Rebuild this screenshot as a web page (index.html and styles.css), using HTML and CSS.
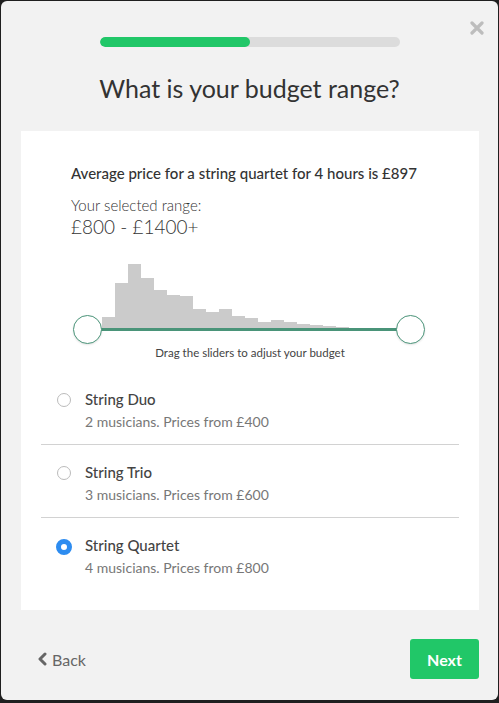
FILE: index.html
```html
<!DOCTYPE html>
<html lang="en">
<head>
  <meta charset="UTF-8">
  <title>Budget range</title>
  <link rel="stylesheet" href="styles.css">
</head>
<body>

<div class="modal">
  <button class="close" aria-label="Close">
    <svg width="14" height="14" viewBox="0 0 14 14"><path d="M2 2 L12 12 M12 2 L2 12" stroke="#bdbdbd" stroke-width="3.2" stroke-linecap="round"/></svg>
  </button>

  <div class="progress"><div class="progress-fill"></div></div>

  <h1>What is your budget range?</h1>

  <div class="card">
    <div class="summary">
      <p class="avg">Average price for a string quartet for 4 hours is £897</p>
      <p class="range-label">Your selected range:</p>
      <p class="range-value">£800 - £1400+</p>
    </div>

    <div class="slider">
      <div class="histogram">
        <span style="height:11px"></span>
        <span style="height:45px"></span>
        <span style="height:64px"></span>
        <span style="height:50px"></span>
        <span style="height:38px"></span>
        <span style="height:33px"></span>
        <span style="height:32px"></span>
        <span style="height:19px"></span>
        <span style="height:16px"></span>
        <span style="height:19px"></span>
        <span style="height:12px"></span>
        <span style="height:10px"></span>
        <span style="height:6px"></span>
        <span style="height:8px"></span>
        <span style="height:6px"></span>
        <span style="height:4px"></span>
        <span style="height:3px"></span>
        <span style="height:2px"></span>
        <span style="height:1px"></span>
      </div>
      <div class="track"></div>
      <div class="handle handle-min"></div>
      <div class="handle handle-max"></div>
    </div>
    <p class="hint">Drag the sliders to adjust your budget</p>

    <ul class="options">
      <li class="option">
        <span class="radio"></span>
        <div>
          <div class="option-name">String Duo</div>
          <div class="option-desc">2 musicians. Prices from £400</div>
        </div>
      </li>
      <li class="option">
        <span class="radio"></span>
        <div>
          <div class="option-name">String Trio</div>
          <div class="option-desc">3 musicians. Prices from £600</div>
        </div>
      </li>
      <li class="option">
        <span class="radio checked"></span>
        <div>
          <div class="option-name">String Quartet</div>
          <div class="option-desc">4 musicians. Prices from £800</div>
        </div>
      </li>
    </ul>
  </div>

  <div class="footer">
    <a class="back" href="#">
      <svg width="11" height="14" viewBox="0 0 11 14"><path d="M8 2 L3 7 L8 12" fill="none" stroke="#666" stroke-width="3" stroke-linecap="round" stroke-linejoin="round"/></svg>
      Back
    </a>
    <button class="next">Next</button>
  </div>
</div>

</body>
</html>
```

FILE: styles.css
```css
body { margin: 0; background: #1f1f1f; font-family: Lato, "Open Sans", sans-serif; color: #333; }
p { margin: 0; }

.modal { position: relative; margin: 1px 1px 0 1px; height: 699px; background: #f2f2f2; border-radius: 6px; display: flex; flex-direction: column; }
.close { position: absolute; top: 20px; right: 14px; background: none; border: 0; padding: 0; }

.progress { width: 300px; height: 10px; margin: 36px auto 0; background: #dcdcdc; border-radius: 5px; overflow: hidden; }
.progress-fill { width: 50%; height: 100%; background: #21c768; border-radius: 5px; }

h1 { margin: 25px 0 0; text-align: center; font-size: 25px; font-weight: 400; line-height: 32px; color: #333; }

.card { margin: 27px 19px 0 20px; height: 479px; background: #fff; box-sizing: border-box; padding-top: 32px; }

.summary { padding-left: 50px; }
.avg { font-size: 15px; font-weight: 500; line-height: 20px; color: #333; }
.range-label { margin-top: 13px; font-size: 15px; font-weight: 300; line-height: 18px; color: #333; }
.range-value { margin-top: 1px; font-size: 19px; font-weight: 300; line-height: 24px; color: #333; }

.slider { position: relative; margin: 19px 0 0 52px; width: 352px; padding-top: 6px; }
.histogram { display: flex; align-items: flex-end; height: 64px; margin-left: 29px; }
.histogram span { width: 13px; background: #cbcbcb; }
.track { height: 3px; margin: 0 15px; background: #4a9479; }
.handle { position: absolute; bottom: -13px; width: 27px; height: 27px; border: 1px solid #4a9479; border-radius: 50%; background: #fff; box-shadow: 0 1px 2px rgba(0,0,0,0.1); }
.handle-min { left: 0; }
.handle-max { right: 0; }

.hint { margin-top: 14px; text-align: center; font-size: 11.5px; line-height: 16px; color: #444; }

.options { list-style: none; margin: 11px 20px 0; padding: 0; }
.option { display: flex; align-items: flex-start; gap: 14px; padding: 17px 0 11px 16px; border-bottom: 1px solid #d2d2d2; }
.option:last-child { border-bottom: 0; }
.radio { flex: none; width: 14px; height: 14px; margin-top: 4px; border: 1px solid #bbb; border-radius: 50%; box-sizing: border-box; }
.radio.checked { border: 5px solid #2d8cf0; background: #fff; width: 16px; height: 16px; margin-left: -1px; margin-right: -1px; }
.option-name { font-size: 15px; font-weight: 500; line-height: 20px; color: #444; }
.option-desc { margin-top: 2px; font-size: 14px; line-height: 22px; color: #777; }

.footer { display: flex; align-items: center; justify-content: space-between; margin: 29px 19px 0 36px; }
.back { display: flex; align-items: center; gap: 4px; font-size: 16px; color: #666; text-decoration: none; }
.next { width: 69px; height: 40px; border: 0; border-radius: 3px; background: #21c768; color: #fff; font-family: inherit; font-size: 16px; font-weight: 700; }
```
